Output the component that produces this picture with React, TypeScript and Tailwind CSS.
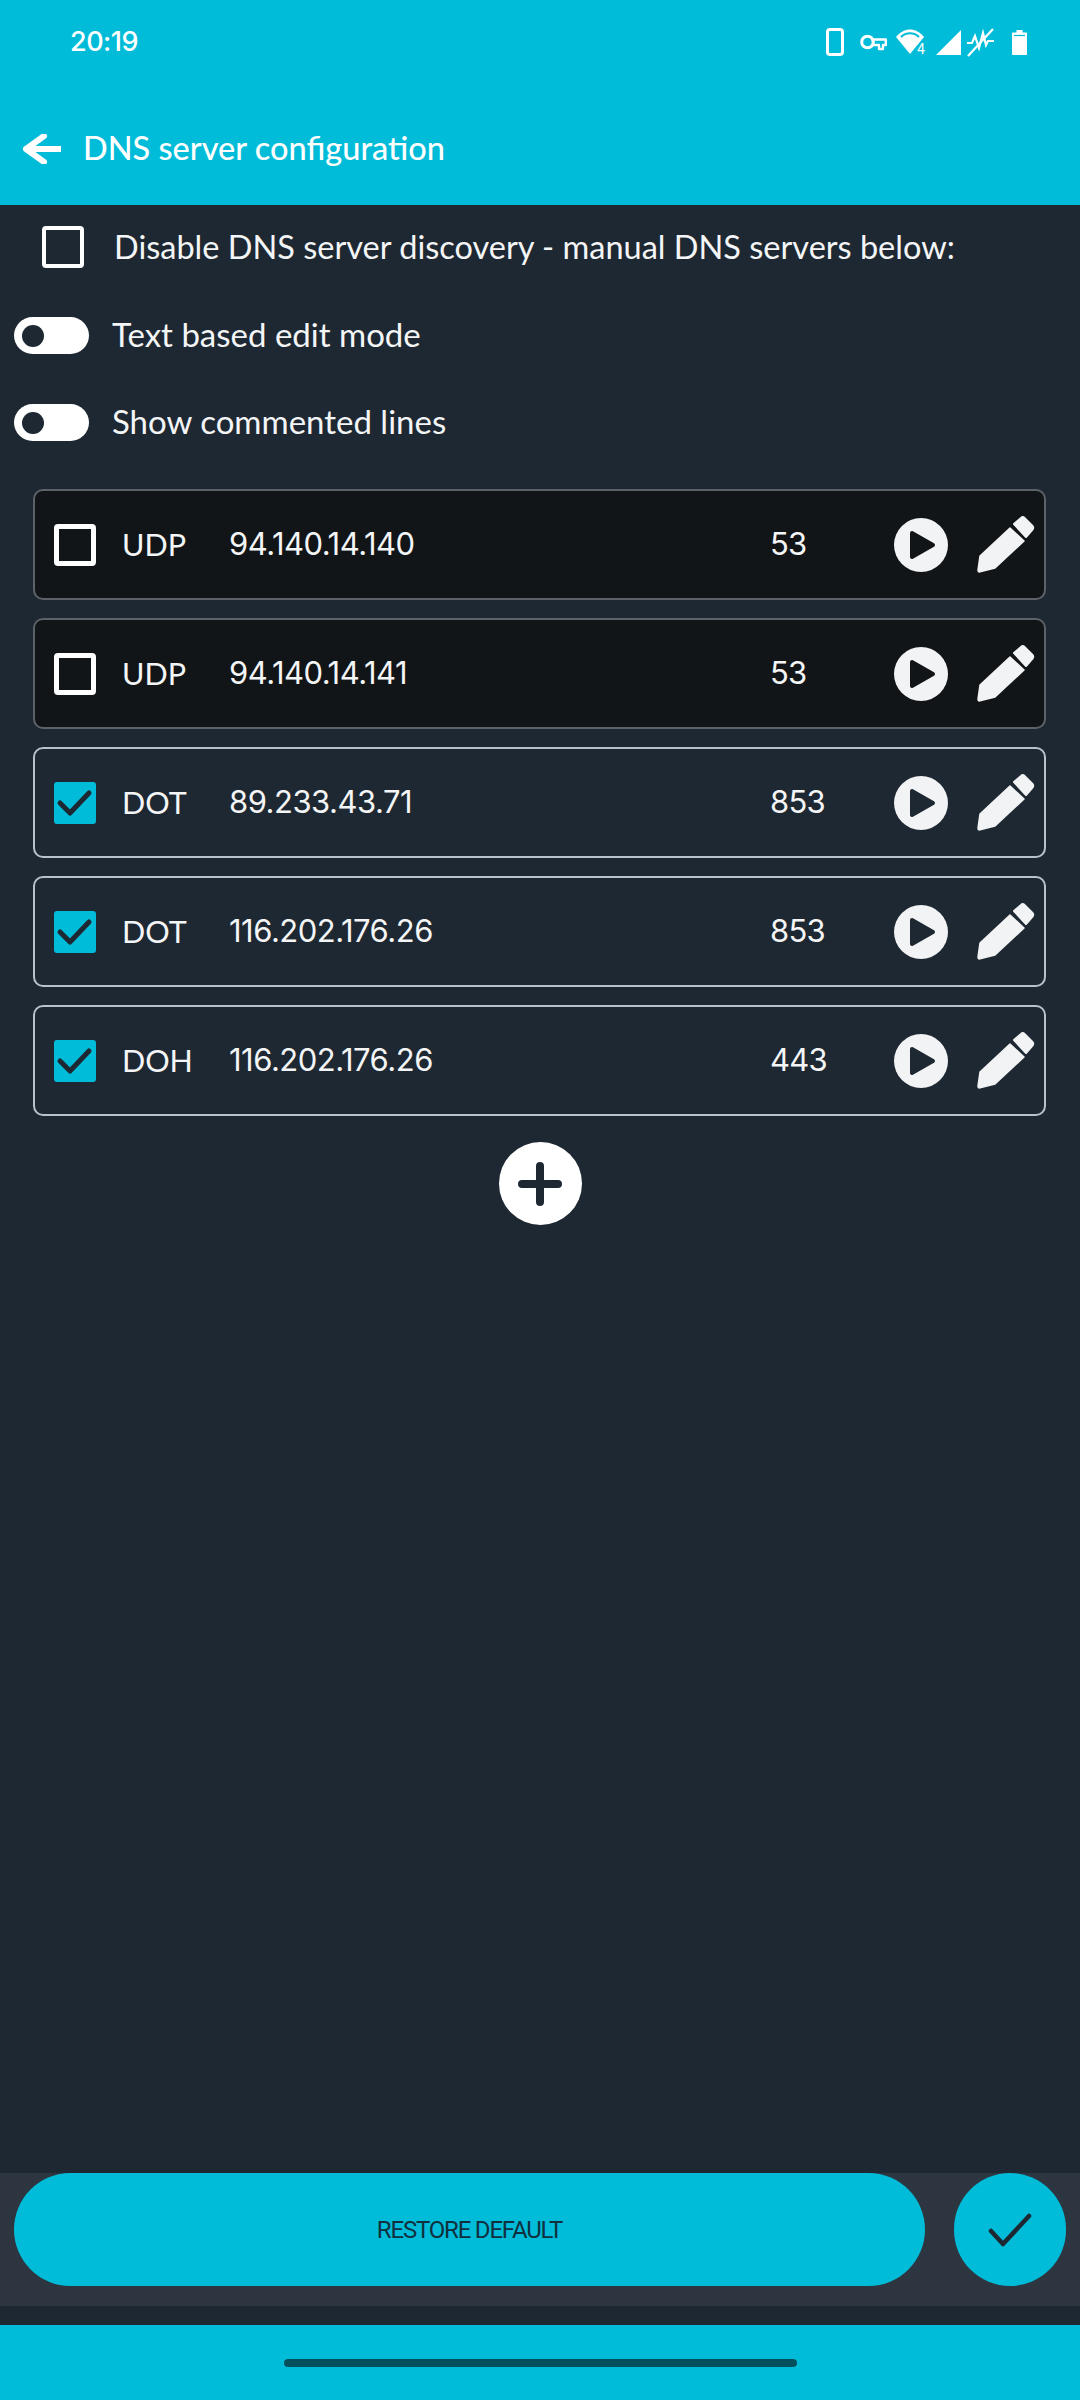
import React from "react";

const servers = [
  { type: "UDP", ip: "94.140.14.140", port: "53", on: false },
  { type: "UDP", ip: "94.140.14.141", port: "53", on: false },
  { type: "DOT", ip: "89.233.43.71", port: "853", on: true },
  { type: "DOT", ip: "116.202.176.26", port: "853", on: true },
  { type: "DOH", ip: "116.202.176.26", port: "443", on: true },
];

function StatusIcons() {
  return (
    <div className="flex items-center">
      {/* phone */}
      <svg width="18" height="28" viewBox="0 0 18 28">
        <rect x="1.5" y="1.5" width="15" height="25" rx="2.5" fill="none" stroke="white" strokeWidth="3" />
      </svg>
      {/* vpn key */}
      <svg width="27" height="17" viewBox="0 0 27 17" className="ml-[16px]">
        <circle cx="7.5" cy="8" r="5.8" fill="none" stroke="white" strokeWidth="3" />
        <path d="M13 5.5H25.8V11H23V15H19V11H13Z" fill="none" stroke="white" strokeWidth="2.4" strokeLinejoin="round" />
      </svg>
      {/* wifi */}
      <div className="relative ml-[8px] w-[33px] h-[28px]">
        <svg width="32" height="28" viewBox="0 0 32 28">
          <path d="M1 9C9 -1 21 -1 29 9L15 26Z" fill="white" />
          <path d="M6 9C11 4 19 4 24 9" fill="none" stroke="#00bcd8" strokeWidth="2" />
        </svg>
        <span className="absolute left-[22px] top-[13px] text-[14px] leading-[16px] font-['Roboto',sans-serif]">4</span>
      </div>
      {/* signal */}
      <svg width="25" height="26" viewBox="0 0 25 26" className="ml-[8px]">
        <path d="M25 1V26H0Z" fill="white" />
      </svg>
      {/* no data */}
      <svg width="27" height="29" viewBox="0 0 27 29" className="ml-[6px]">
        <path d="M0 15H5L8 8L12 20L16 5L19 17L21 13H27" fill="none" stroke="white" strokeWidth="2.2" />
        <path d="M1 28L26 1" fill="none" stroke="white" strokeWidth="2.2" />
      </svg>
      {/* battery */}
      <svg width="15" height="25" viewBox="0 0 15 25" className="ml-[18px]">
        <path d="M4.5 0H10.5V2.5H14C14.6 2.5 15 2.9 15 3.5V24C15 24.6 14.6 25 14 25H1C0.4 25 0 24.6 0 24V3.5C0 2.9 0.4 2.5 1 2.5H4.5Z" fill="white" />
        <path d="M2 5.5H13" stroke="#00bcd8" strokeWidth="1.2" />
      </svg>
    </div>
  );
}

function Toggle({ label }: { label: string }) {
  return (
    <div className="flex items-center h-[87px] pl-[14px]">
      <div className="w-[75px] h-[37px] rounded-full bg-white flex items-center pl-[8px]">
        <div className="w-[22px] h-[22px] rounded-full bg-[#1e2832]" />
      </div>
      <span className="ml-[23px] mb-[2px] text-[33px] text-[#f4f5f6]">{label}</span>
    </div>
  );
}

function PlayIcon({ on }: { on: boolean }) {
  return (
    <svg width="54" height="54" viewBox="0 0 54 54" className="shrink-0">
      <circle cx="27" cy="27" r="27" fill="#f2f3f4" />
      <path
        d="M18 15L39 27L18 39Z"
        className={on ? "fill-[#1e2832] stroke-[#1e2832]" : "fill-[#121518] stroke-[#121518]"}
        strokeWidth="4"
        strokeLinejoin="round"
      />
    </svg>
  );
}

function PencilIcon() {
  return (
    <svg width="58" height="58" viewBox="0 0 58 58" className="shrink-0 ml-[29px]">
      <path d="M37 8L44 2C45 1 46.5 1 47.5 2L55.5 10C56.5 11 56.5 12.5 55.5 13.5L49 21Z" fill="#f2f3f4" stroke="#f2f3f4" strokeWidth="2" strokeLinejoin="round" />
      <path d="M33 12L47 25L18 52L2 56C1 56 1 55 1 54L3 40Z" fill="#f2f3f4" stroke="#f2f3f4" strokeWidth="1.5" strokeLinejoin="round" />
    </svg>
  );
}

function ServerRow({ type, ip, port, on }: { type: string; ip: string; port: string; on: boolean }) {
  return (
    <div
      className={
        on
          ? "flex items-center h-[111px] rounded-[10px] border-2 border-[#b8c2cc] pl-[19px] text-[#f4f5f6]"
          : "flex items-center h-[111px] rounded-[10px] border-2 border-[#5d6268] bg-[#121518] pl-[19px] text-[#f4f5f6]"
      }
    >
      {on ? (
        <div className="w-[42px] h-[42px] rounded-[3px] bg-[#00bcd8] shrink-0">
          <svg width="42" height="42" viewBox="0 0 42 42">
            <path d="M6 21L16 31L35 11" fill="none" stroke="#1e2832" strokeWidth="5" strokeLinecap="round" strokeLinejoin="round" />
          </svg>
        </div>
      ) : (
        <div className="w-[42px] h-[42px] rounded-[4px] border-[5px] border-white shrink-0" />
      )}
      <span className="ml-[26px] w-[107px] text-[30.5px]">{type}</span>
      <span className="w-[541px] text-[31px] tracking-[-0.5px] font-['Inter',sans-serif]">{ip}</span>
      <span className="w-[124px] text-[31px] tracking-[-0.8px] font-['Inter',sans-serif]">{port}</span>
      <PlayIcon on={on} />
      <PencilIcon />
    </div>
  );
}

export default function App() {
  return (
    <div className="w-[1080px] h-[2400px] flex flex-col bg-[#1e2832] font-['Lato',sans-serif] overflow-hidden">
      <header className="h-[205px] bg-[#00bcd8] text-white shrink-0">
        <div className="h-[84px] flex items-center justify-between pl-[70px] pr-[53px]">
          <span className="text-[27px] font-medium font-['Inter',sans-serif] tracking-[-0.5px]">20:19</span>
          <StatusIcons />
        </div>
        <div className="flex items-center pl-[23px] pt-[44px]">
          <svg width="38" height="30" viewBox="0 0 38 30">
            <path d="M3 15H37M21 2L3 15L21 28" fill="none" stroke="white" strokeWidth="6" strokeLinecap="round" strokeLinejoin="round" />
          </svg>
          <span className="ml-[22px] mb-[2px] text-[32.5px] font-medium leading-[40px]">DNS server configuration</span>
        </div>
      </header>

      <div className="flex items-center h-[84px] pl-[42px] shrink-0">
        <div className="w-[42px] h-[42px] rounded-[4px] border-[4px] border-white" />
        <span className="ml-[30px] text-[32.5px] text-[#f4f5f6]">Disable DNS server discovery - manual DNS servers below:</span>
      </div>
      <div className="mt-[3px]">
        <Toggle label="Text based edit mode" />
        <Toggle label="Show commented lines" />
      </div>

      <div className="mt-[23px] ml-[33px] w-[1013px] flex flex-col gap-[18px]">
        {servers.map((s, i) => (
          <ServerRow key={i} {...s} />
        ))}
      </div>

      <div className="mt-[26px] flex justify-center">
        <div className="w-[83px] h-[83px] rounded-full bg-white flex items-center justify-center">
          <svg width="44" height="44" viewBox="0 0 44 44">
            <path d="M22 4V40M4 22H40" stroke="#1e2832" strokeWidth="8" strokeLinecap="round" />
          </svg>
        </div>
      </div>

      <div className="mt-auto bg-[#2d3540] h-[133px] pl-[14px] flex items-start gap-[29px] shrink-0">
        <div className="w-[911px] h-[113px] rounded-full bg-[#00bcd8] flex items-center justify-center text-[24px] tracking-[-1.2px] text-[#10303f] font-['Roboto',sans-serif]">
          RESTORE DEFAULT
        </div>
        <div className="w-[112px] h-[113px] rounded-full bg-[#00bcd8] flex items-center justify-center">
          <svg width="44" height="34" viewBox="0 0 44 34">
            <path d="M3 18L15 31L41 3" fill="none" stroke="#1e2832" strokeWidth="4.5" strokeLinecap="round" strokeLinejoin="round" />
          </svg>
        </div>
      </div>

      <div className="mt-[19px] h-[75px] bg-[#00bcd8] flex justify-center pt-[34px] shrink-0">
        <div className="w-[513px] h-[8px] rounded-full bg-[#04505c]" />
      </div>
    </div>
  );
}
